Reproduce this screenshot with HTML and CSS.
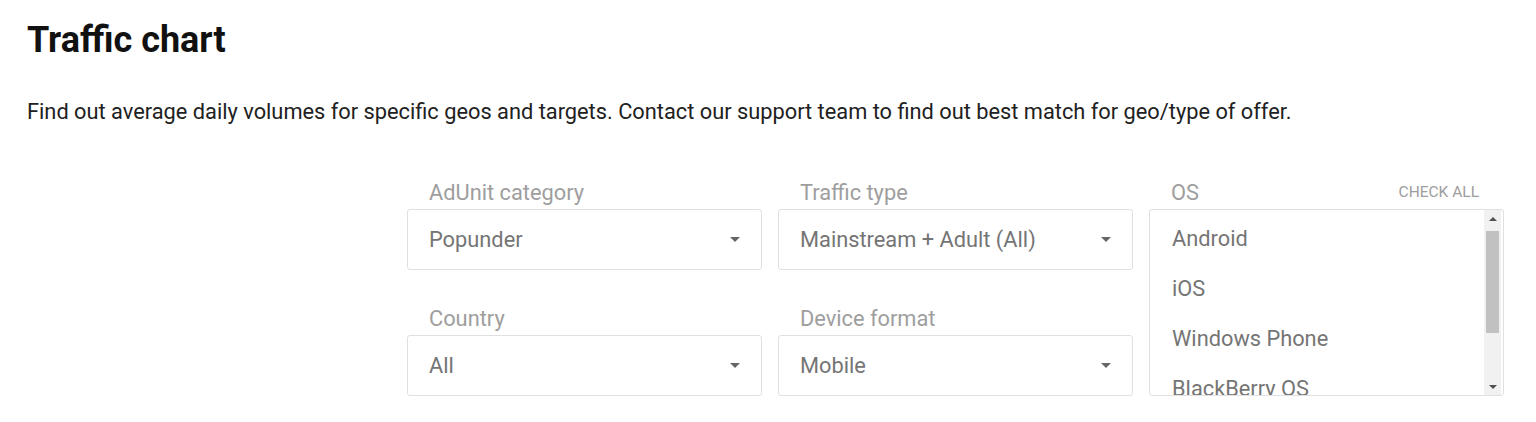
FILE: index.html
```html
<!DOCTYPE html>
<html lang="en">
<head>
  <meta charset="UTF-8" />
  <title>Traffic chart</title>
  <link rel="stylesheet" href="styles.css">
</head>
<body>

  <div class="page">
    <h1 class="title">Traffic chart</h1>
    <p class="intro">Find out average daily volumes for specific geos and targets. Contact our support team to find out best match for geo/type of offer.</p>

    <!-- Filters -->
    <div class="filters">
      <div class="field">
        <div class="field-label">AdUnit category</div>
        <div class="select">
          <span>Popunder</span>
          <span class="caret"></span>
        </div>
      </div>

      <div class="field">
        <div class="field-label">Traffic type</div>
        <div class="select">
          <span>Mainstream + Adult (All)</span>
          <span class="caret"></span>
        </div>
      </div>

      <div class="field field-os">
        <div class="field-label">
          <span>OS</span>
          <a href="#" class="check-all">Check all</a>
        </div>
        <div class="listbox">
          <ul class="options">
            <li>Android</li>
            <li>iOS</li>
            <li>Windows Phone</li>
            <li>BlackBerry OS</li>
          </ul>
          <div class="scrollbar">
            <div class="sb-btn"><span class="sb-up"></span></div>
            <div class="sb-track"><div class="sb-thumb"></div></div>
            <div class="sb-btn"><span class="sb-down"></span></div>
          </div>
        </div>
      </div>

      <div class="field">
        <div class="field-label">Country</div>
        <div class="select">
          <span>All</span>
          <span class="caret"></span>
        </div>
      </div>

      <div class="field">
        <div class="field-label">Device format</div>
        <div class="select">
          <span>Mobile</span>
          <span class="caret"></span>
        </div>
      </div>
    </div>
  </div>

</body>
</html>
```

FILE: styles.css
```css
/* Global Styles */
* {
  margin: 0;
  padding: 0;
  box-sizing: border-box;
}

body {
  font-family: Roboto, 'Noto Sans', Arial, sans-serif;
  background: #fff;
  color: #212121;
}

.page {
  padding: 20px 32px 0 27px;
}

.title {
  font-size: 36px;
  font-weight: 700;
  line-height: 40px;
  color: #111;
}

.intro {
  margin-top: 38px;
  font-size: 21.8px;
  line-height: 28px;
  color: #212121;
}

/* Filters */
.filters {
  margin-left: 380px;
  margin-top: 54px;
  display: grid;
  grid-template-columns: repeat(3, 1fr);
  grid-template-rows: auto auto;
  column-gap: 16px;
  row-gap: 36px;
}

.field-os {
  grid-column: 3;
  grid-row: 1 / span 2;
  display: flex;
  flex-direction: column;
}

.field-label {
  display: flex;
  justify-content: space-between;
  align-items: center;
  padding: 0 25px 0 22px;
  height: 24px;
  margin-bottom: 5px;
  font-size: 21.8px;
  color: #9e9e9e;
}

.check-all {
  font-size: 15.5px;
  text-transform: uppercase;
  text-decoration: none;
  color: #9e9e9e;
}

.select {
  height: 61px;
  border: 1px solid #e0e0e0;
  border-radius: 3px;
  display: flex;
  align-items: center;
  justify-content: space-between;
  padding: 0 21px 0 21px;
  font-size: 21.8px;
  color: #757575;
}

.caret {
  width: 0;
  height: 0;
  border-left: 5px solid transparent;
  border-right: 5px solid transparent;
  border-top: 5px solid #666;
}

/* OS list */
.listbox {
  height: 187px;
  border: 1px solid #e0e0e0;
  border-radius: 3px;
  display: flex;
  overflow: hidden;
}

.options {
  flex: 1;
  list-style: none;
  padding: 4px 0 0 22px;
  overflow: hidden;
}

.options li {
  height: 50px;
  line-height: 50px;
  font-size: 21.8px;
  color: #757575;
}

.scrollbar {
  width: 17px;
  margin-right: 2px;
  background: #f1f1f1;
  display: flex;
  flex-direction: column;
}

.sb-btn {
  height: 17px;
  display: flex;
  align-items: center;
  justify-content: center;
}

.sb-up {
  border-left: 4px solid transparent;
  border-right: 4px solid transparent;
  border-bottom: 4px solid #505050;
}

.sb-down {
  border-left: 4px solid transparent;
  border-right: 4px solid transparent;
  border-top: 4px solid #505050;
}

.sb-track {
  flex: 1;
  padding: 4px 2px 0;
}

.sb-thumb {
  height: 102px;
  background: #c1c1c1;
}
```
